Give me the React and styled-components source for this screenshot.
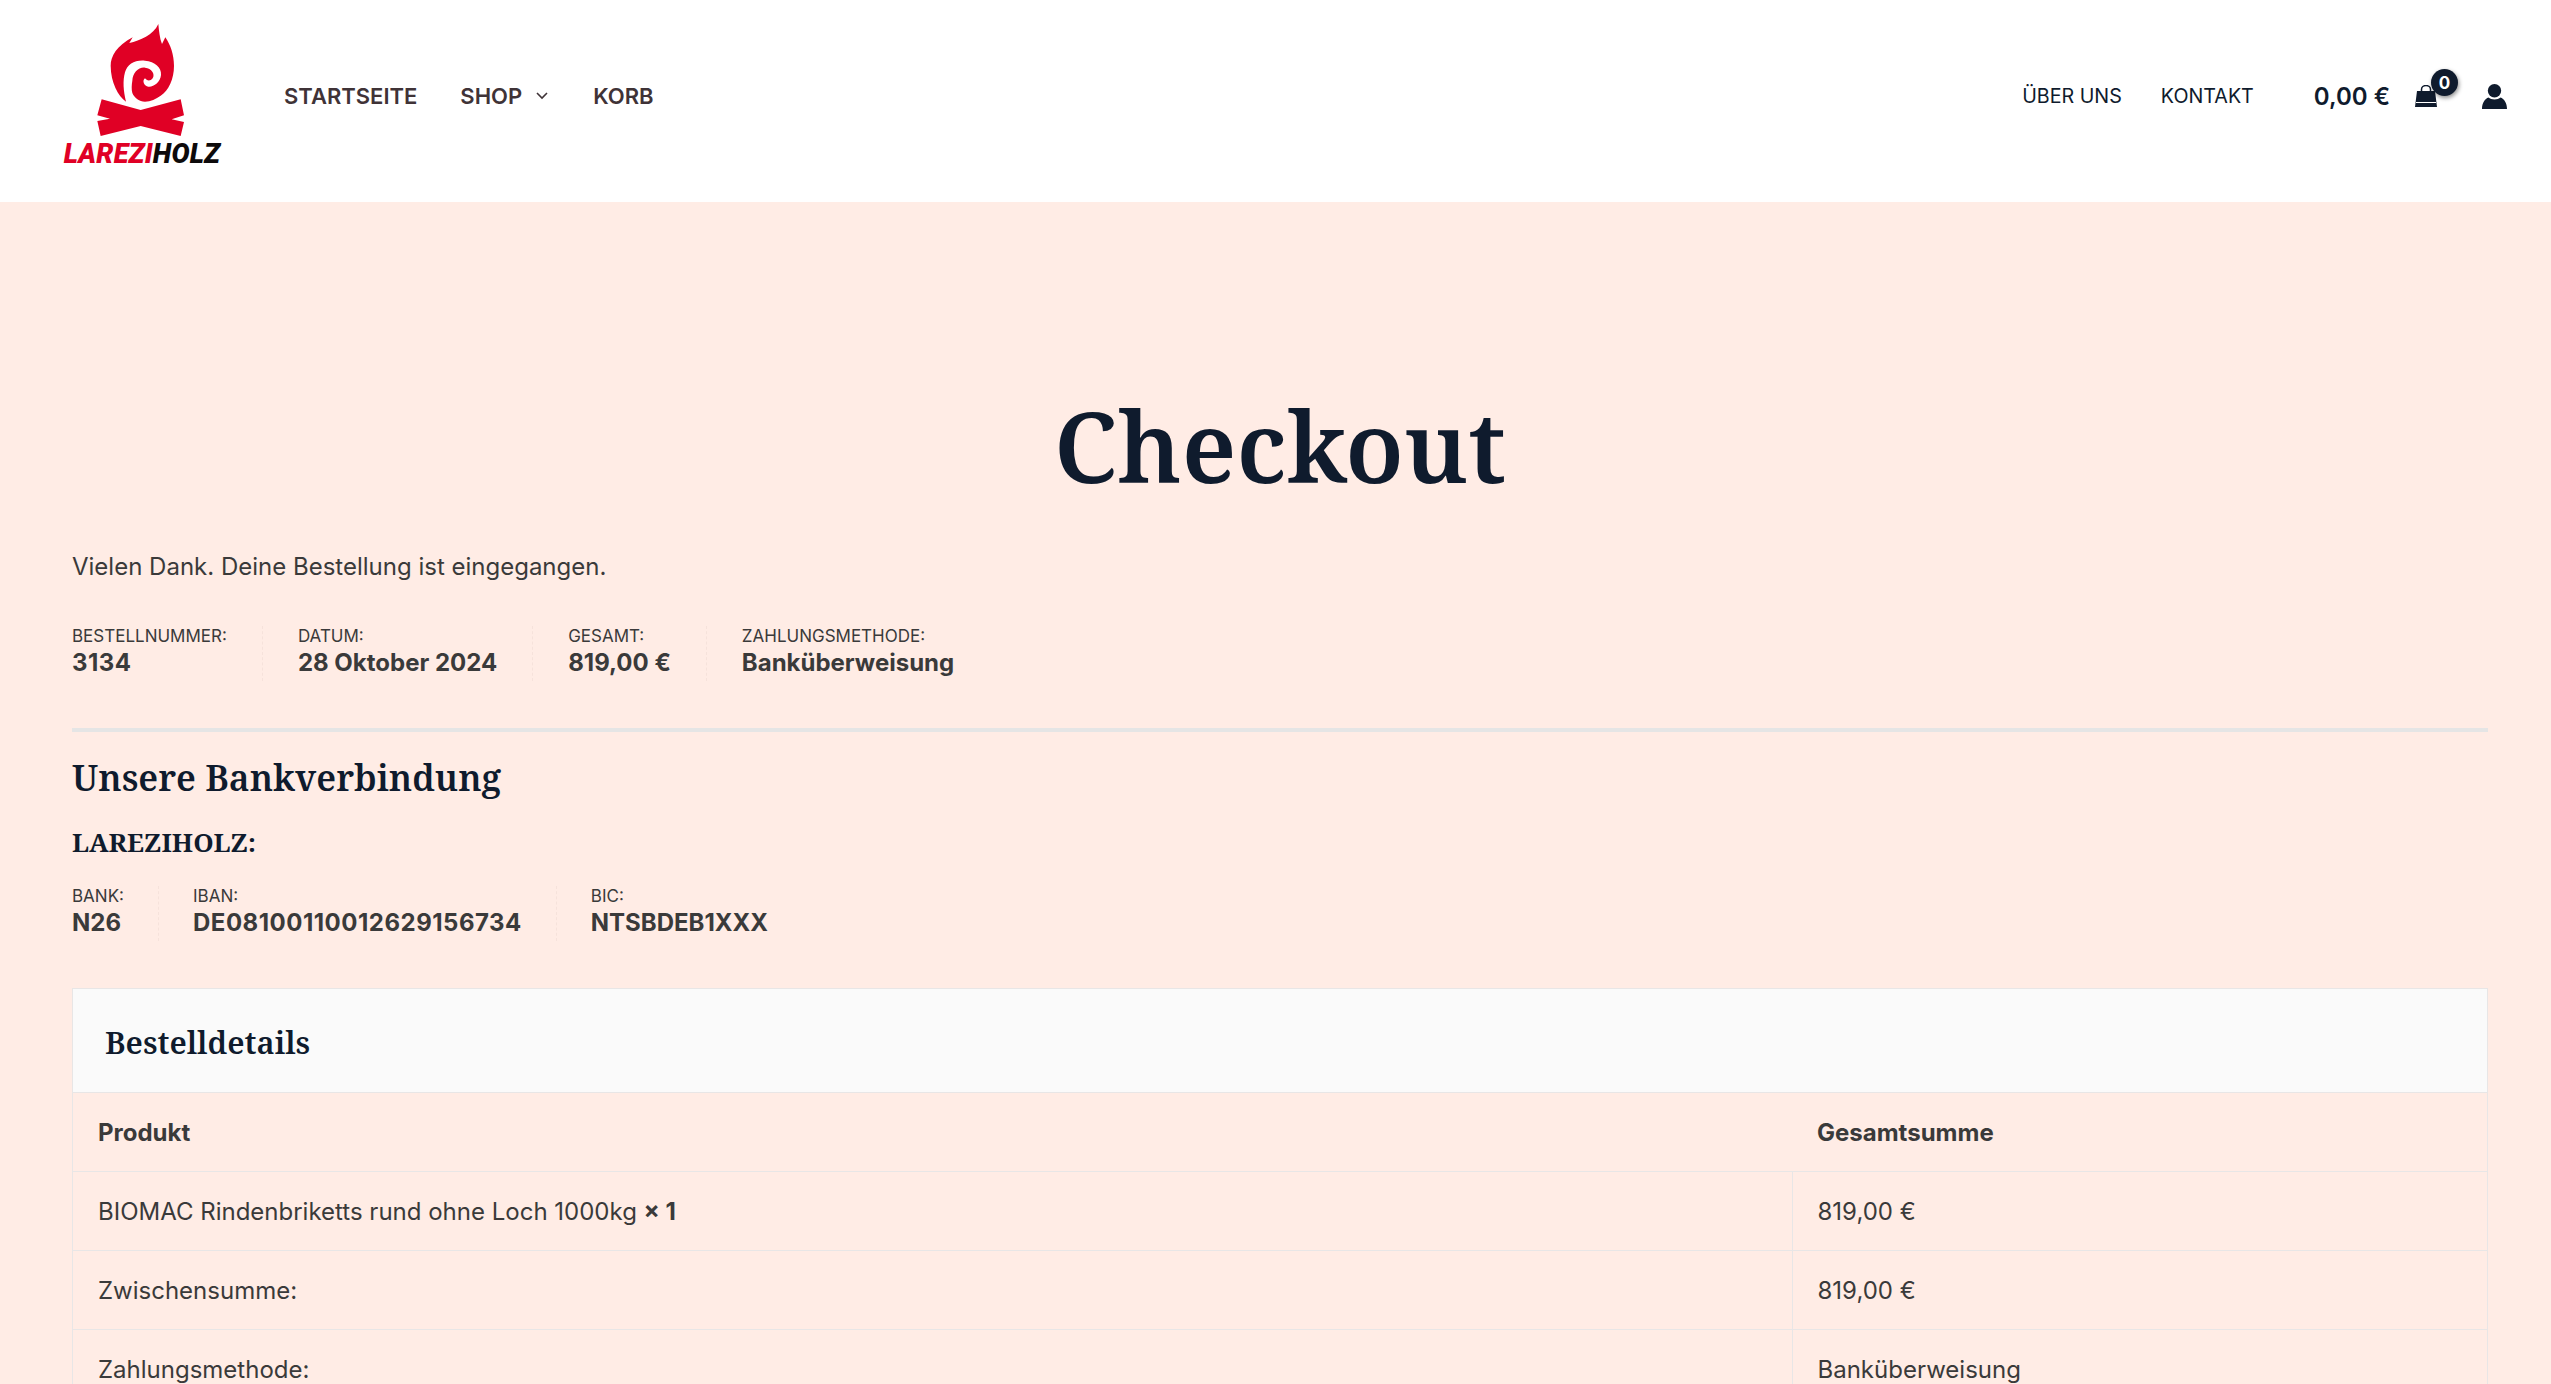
import React from 'react'
import styled, { createGlobalStyle } from 'styled-components'

const Global = createGlobalStyle`
html, body { margin: 0; padding: 0; height: 1384px; overflow: hidden; }
body {
  background: #ffece5;
  font-family: Inter, "Noto Sans", sans-serif;
  color: #3a3a3a;
  font-size: 24px;
}
* { box-sizing: border-box; }
`

const Page = styled.div`
height: 1384px;
overflow: hidden;
`

const Header = styled.header`
height: 202px;
background: #fff;
display: flex;
align-items: center;
justify-content: space-between;
padding: 0 44px 10px 63px;
`

const LeftSide = styled.div`
display: flex;
align-items: center;
`

const Logo = styled.a`
width: 158px;
display: flex;
flex-direction: column;
align-items: center;
margin-bottom: 7px;
`

const FlameMark = styled.svg`
width: 100px;
height: 123px;
margin-right: 4px;
`

const LogoText = styled.span`
font-family: Roboto, "Liberation Sans", sans-serif;
font-style: italic;
font-weight: 900;
font-size: 27px;
line-height: 24px;
letter-spacing: 0.2px;
color: #e00025;
white-space: nowrap;
`

const LogoDark = styled.span`
color: #0d0a0b;
`

const MainNav = styled.nav`
display: flex;
align-items: center;
gap: 43px;
margin-left: 63px;
`

const MainLink = styled.a`
font-size: 22px;
font-weight: 600;
color: #3f3337;
display: flex;
align-items: center;
gap: 14px;
`

const Chevron = styled.svg`
width: 12px;
height: 8px;
margin-right: 2px;
`

const RightSide = styled.div`
display: flex;
align-items: center;
`

const SideNav = styled.nav`
display: flex;
gap: 39px;
margin-right: 60px;
`

const SideLink = styled.a`
font-size: 19.7px;
color: #0f1b2d;
`

const CartTotal = styled.span`
font-size: 24px;
font-weight: 600;
color: #0f1b2d;
`

const Cart = styled.span`
position: relative;
display: flex;
margin-left: 25px;
`

const CartCount = styled.span`
position: absolute;
top: -16px;
left: 16px;
width: 27px;
height: 27px;
border-radius: 50%;
background: #0f1b2d;
color: #fff;
font-size: 17px;
font-weight: 700;
display: flex;
align-items: center;
justify-content: center;
box-shadow: 1px 2px 4px rgba(0, 0, 0, 0.45);
`

const Account = styled.span`
display: flex;
margin-left: 45px;
`

const Main = styled.main`
padding: 0 63px 0 72px;
`

const Title = styled.h1`
margin: 0;
padding-top: 178px;
text-align: center;
font-family: "Noto Serif", "DejaVu Serif", serif;
font-size: 98px;
line-height: 130px;
font-weight: 650;
color: #0f1b2d;
`

const Thanks = styled.p`
margin: 0;
padding-top: 37px;
line-height: 40px;
`

const DetailList = styled.ul`
list-style: none;
margin: 0;
padding: 0;
display: flex;
`

const OverviewList = styled(DetailList)`
margin-top: 39px;
padding-bottom: 47px;
border-bottom: 4px solid #e5e5e5;
`

const BankList = styled(DetailList)`
margin-top: 26px;
`

const DetailItem = styled.li`
padding: 0 35px;
border-right: 1px dashed #f6e2db;
height: 55px;
&:first-child { padding-left: 0; }
&:last-child { border-right: 0; }
`

const BankItem = styled(DetailItem)`
padding: 0 34px;
`

const DetailLabel = styled.span`
display: block;
font-size: 17px;
line-height: 20px;
text-transform: uppercase;
`

const DetailValue = styled.strong`
display: block;
font-size: 24px;
line-height: 34px;
font-weight: 700;
letter-spacing: ${p => (p.$wide ? '0.5px' : 'normal')};
`

const BankHeading = styled.h2`
margin: 0;
padding-top: 25px;
font-family: "Noto Serif", "DejaVu Serif", serif;
font-size: 35.6px;
line-height: 40px;
font-weight: 600;
color: #0f1b2d;
`

const BankName = styled.h3`
margin: 0;
padding-top: 27px;
font-family: "Noto Serif", "DejaVu Serif", serif;
font-size: 26px;
line-height: 36px;
font-weight: 700;
color: #0f1b2d;
`

const OrderBox = styled.section`
margin-top: 47px;
border: 1px solid #e8e6e6;
`

const OrderTitle = styled.h2`
margin: 0;
height: 103px;
padding: 2px 0 0 32px;
display: flex;
align-items: center;
background: #fafafa;
font-family: "Noto Serif", "DejaVu Serif", serif;
font-size: 31px;
font-weight: 600;
color: #0f1b2d;
`

const Table = styled.table`
width: 100%;
border-collapse: collapse;
table-layout: fixed;
`

const Cell = styled.td`
height: 79px;
padding: 0 25px;
border-top: 1px solid #e8e6e6;
font-weight: ${p => (p.$head ? 700 : 400)};
&:first-child { width: 1719px; }
&:last-child { border-left: ${p => (p.$head ? 0 : '1px solid #e8e6e6')}; }
`

const Qty = styled.strong`
font-weight: 700;
`

function Flame () {
  return (
    <FlameMark viewBox="0 0 300 369">
      <path fill="#e00025" d="M205 15 C207 35 209 58 216 75 L226 55 C242 78 252 108 252 140 C252 180 236 214 212 230 C198 240 182 248 165 248 C148 248 134 238 127 222 C124 212 125 196 127 185 C128 162 145 144 165 146 C185 148 196 165 188 178 C180 188 170 185 165 178 C155 185 163 202 175 203 C190 205 211 190 213 168 C215 145 195 128 165 125 C135 122 112 135 105 160 C98 185 100 215 108 248 C85 232 62 190 62 140 C62 112 80 80 128 55 L118 72 C150 65 190 48 205 15 Z" />
      <path fill="#e00025" d="M35 241 L152 273 L272 241 L282 289 L245 301 L282 309 L272 351 L152 321 L32 351 L22 306 L60 299 L22 289 Z" />
    </FlameMark>
  )
}

export default function App () {
  return (
    <Page>
      <Global />
      <Header>
        <LeftSide>
          <Logo>
            <Flame />
            <LogoText>LAREZI<LogoDark>HOLZ</LogoDark></LogoText>
          </Logo>
          <MainNav>
            <MainLink>STARTSEITE</MainLink>
            <MainLink>SHOP
              <Chevron viewBox="0 0 12 8" fill="none" stroke="#3f3337" strokeWidth="1.6"><path d="M1 1l5 5 5-5" /></Chevron>
            </MainLink>
            <MainLink>KORB</MainLink>
          </MainNav>
        </LeftSide>
        <RightSide>
          <SideNav>
            <SideLink>ÜBER UNS</SideLink>
            <SideLink>KONTAKT</SideLink>
          </SideNav>
          <CartTotal>0,00 €</CartTotal>
          <Cart>
            <svg width="22" height="22" viewBox="0 0 22 22">
              <path fill="none" stroke="#0f1b2d" strokeWidth="1.5" d="M6.5 7V4.5a4.5 4 0 0 1 9 0V7" />
              <path fill="#0f1b2d" d="M2 6h18l2 16H0z" />
              <path fill="none" stroke="#fff" strokeWidth="1" d="M1 17.5h20" />
            </svg>
            <CartCount>0</CartCount>
          </Cart>
          <Account>
            <svg width="25" height="25" viewBox="0 0 25 25" fill="#0f1b2d">
              <circle cx="12.5" cy="6.7" r="6.7" />
              <path d="M0 25C0 19 3 14.5 6.5 13.5C9 16 16 16 18.5 13.5C22 14.5 25 19 25 25Z" />
            </svg>
          </Account>
        </RightSide>
      </Header>
      <Main>
        <Title>Checkout</Title>
        <Thanks>Vielen Dank. Deine Bestellung ist eingegangen.</Thanks>
        <OverviewList>
          <DetailItem><DetailLabel>Bestellnummer:</DetailLabel><DetailValue $wide>3134</DetailValue></DetailItem>
          <DetailItem><DetailLabel>Datum:</DetailLabel><DetailValue>28 Oktober 2024</DetailValue></DetailItem>
          <DetailItem><DetailLabel>Gesamt:</DetailLabel><DetailValue>819,00 €</DetailValue></DetailItem>
          <DetailItem><DetailLabel>Zahlungsmethode:</DetailLabel><DetailValue>Banküberweisung</DetailValue></DetailItem>
        </OverviewList>
        <BankHeading>Unsere Bankverbindung</BankHeading>
        <BankName>LAREZIHOLZ:</BankName>
        <BankList>
          <BankItem><DetailLabel>Bank:</DetailLabel><DetailValue>N26</DetailValue></BankItem>
          <BankItem><DetailLabel>IBAN:</DetailLabel><DetailValue $wide>DE08100110012629156734</DetailValue></BankItem>
          <BankItem><DetailLabel>BIC:</DetailLabel><DetailValue>NTSBDEB1XXX</DetailValue></BankItem>
        </BankList>
        <OrderBox>
          <OrderTitle>Bestelldetails</OrderTitle>
          <Table>
            <tbody>
              <tr><Cell $head>Produkt</Cell><Cell $head>Gesamtsumme</Cell></tr>
              <tr><Cell>BIOMAC Rindenbriketts rund ohne Loch 1000kg <Qty>× 1</Qty></Cell><Cell>819,00 €</Cell></tr>
              <tr><Cell>Zwischensumme:</Cell><Cell>819,00 €</Cell></tr>
              <tr><Cell>Zahlungsmethode:</Cell><Cell>Banküberweisung</Cell></tr>
            </tbody>
          </Table>
        </OrderBox>
      </Main>
    </Page>
  )
}
